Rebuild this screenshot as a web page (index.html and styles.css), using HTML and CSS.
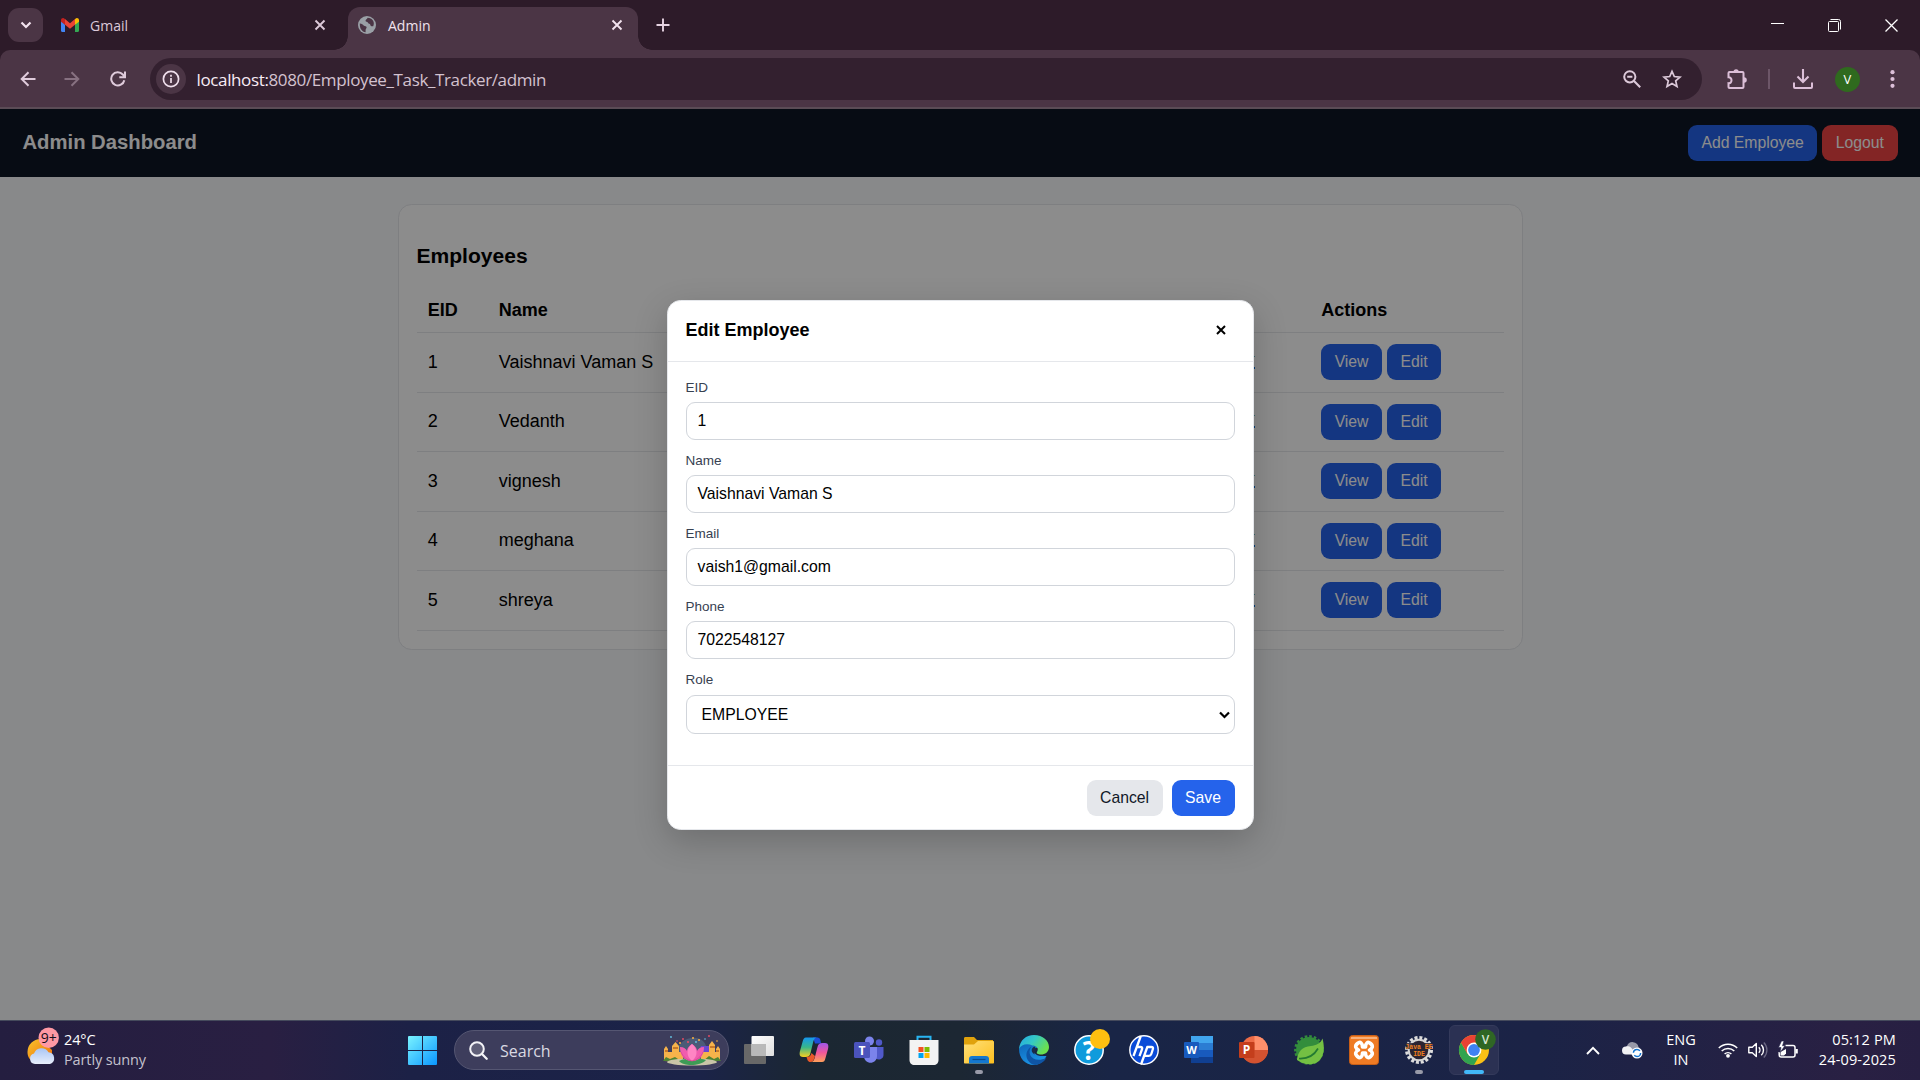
FILE: index.html
```html
<!DOCTYPE html>
<html lang="en">
<head>
<meta charset="utf-8">
<title>Admin</title>
<link rel="stylesheet" href="styles.css">
</head>
<body>
<div class="tabstrip">
  <div class="tab-search"><svg width="12" height="8" viewBox="0 0 12 8"><path d="M1.5 1.5 6 6l4.500-4.500" fill="none" stroke="#f3e3ef" stroke-width="2.200"/></svg></div>
  <div class="tab tab-gmail">
    <svg width="18" height="14" viewBox="0 0 18 14"><path d="M0 2v10.800C0 13.500.5 14 1.200 14H4V6.500z" fill="#4285f4"/><path d="M18 2v10.800c0 .7-.5 1.200-1.200 1.200H14V6.500z" fill="#34a853"/><path d="M14 1.200V6.800l4-3V2.200C18 .2 15.700-.6 14.400.8z" fill="#fbbc04"/><path d="M4 1.200V6.800l-4-3V2.200C0 .2 2.300-.6 3.600.8z" fill="#c5221f"/><path d="M4 1.100 9 5.200l5-4.100v5.700l-5 4-5-4z" fill="#ea4335"/></svg>
    <span class="tab-title">Gmail</span>
    <svg class="tab-close" width="12" height="12" viewBox="0 0 12 12"><path d="M1.500 1.500l9 9M10.500 1.500l-9 9" stroke="#dcc9d9" stroke-width="1.900"/></svg>
  </div>
  <div class="tab tab-active">
    <svg width="18" height="18" viewBox="0 0 18 18"><circle cx="9" cy="9" r="9" fill="#9aa0a6"/><path d="M1.800 7.500c2 .2 3.200 1 4.200 2.300 1 .5 2.300.3 2.600 1.500.2 1.200-1 1.500-1 2.700v2.200C4 15.800 1.600 12.600 1.800 7.500zM9.500 1.800c-.2 1.700-2 1.600-2 3 .2 1.200 1.900.8 2.500 2 .5 1.400 2 .6 2.300 2 .2 1.500 1.500 1.600 2.900 1.400 1.400-2.700.4-5.800-2-7.400-1.200-.7-2.400-1-3.700-1z" fill="#4b3545"/></svg>
    <span class="tab-title">Admin</span>
    <svg class="tab-close" width="12" height="12" viewBox="0 0 12 12"><path d="M1.500 1.500l9 9M10.500 1.500l-9 9" stroke="#f3e3ef" stroke-width="1.900"/></svg>
  </div>
  <svg class="tab-new" width="14" height="14" viewBox="0 0 14 14"><path d="M7 .5v13M.5 7h13" stroke="#e6d3e2" stroke-width="1.900"/></svg>
  <div class="window-controls">
    <svg width="13" height="13" viewBox="0 0 13 13"><path d="M0 4.500h13" stroke="#fff"/></svg>
    <svg width="13" height="13" viewBox="0 0 13 13"><rect x=".5" y="2.500" width="10" height="10" rx="1" fill="none" stroke="#fff"/><path d="M2.500.5h8a2 2 0 0 1 2 2v8" fill="none" stroke="#fff"/></svg>
    <svg width="13" height="13" viewBox="0 0 13 13"><path d="M.5.5l12 12M12.500.5l-12 12" stroke="#fff" stroke-width="1.300"/></svg>
  </div>
</div>

<div class="toolbar">
  <svg class="nav back" width="16" height="16" viewBox="0 0 16 16"><path d="M15.500 8H2M8.500 1.200 1.700 8l6.800 6.800" fill="none" stroke="#dfcbdb" stroke-width="2"/></svg>
  <svg class="nav forward" width="16" height="16" viewBox="0 0 16 16"><path d="M.5 8H14M7.500 1.200 14.300 8l-6.800 6.800" fill="none" stroke="#877181" stroke-width="2"/></svg>
  <svg class="nav reload" width="16" height="16" viewBox="0 0 16 16"><path d="M14.300 9.200A6.600 6.600 0 1 1 12.800 3.500L14.600 5.500M15 .5v5.700H9.300" fill="none" stroke="#dfcbdb" stroke-width="2"/></svg>
  <div class="omnibox">
    <span class="site-info"><svg width="18" height="18" viewBox="0 0 18 18"><circle cx="9" cy="9" r="7.600" fill="none" stroke="#f0dfec" stroke-width="1.700"/><path d="M9 8v5M9 4.800v1.900" stroke="#f0dfec" stroke-width="1.700"/></svg></span>
    <span class="url"><b>localhost:</b>8080/Employee_Task_Tracker/admin</span>
    <svg class="zoom-icon" width="18" height="18" viewBox="0 0 18 18"><circle cx="6.800" cy="6.800" r="5.600" fill="none" stroke="#dcc9d9" stroke-width="2"/><path d="M4.200 6.800h5.200M11 11l6.200 6.200" stroke="#dcc9d9" stroke-width="2.100"/></svg>
    <svg class="star-icon" width="20" height="20" viewBox="0 0 20 20"><path d="M10 2.300l2.300 5.200 5.700.6-4.300 3.800 1.300 5.600-5-3-5 3 1.300-5.600L2 8.100l5.700-.6z" fill="none" stroke="#dcc9d9" stroke-width="1.700"/></svg>
  </div>
  <svg class="ext" width="22" height="22" viewBox="0 0 22 22"><path d="M3.500 4h13a1 1 0 0 1 1 1v14a1 1 0 0 1-1 1h-13a1 1 0 0 1-1-1v-3.800c2 .3 3-1.200 3-2.900S4 9 2.500 9.200V5a1 1 0 0 1 1-1z" fill="none" stroke="#dcbfd8" stroke-width="2"/><path d="M7.500 4a2.600 2.800 0 0 1 5.200 0zM18 9.300a2.800 2.700 0 0 1 0 5.400z" fill="#dcbfd8"/></svg>
  <i class="divider"></i>
  <svg class="download" width="20" height="20" viewBox="0 0 20 20"><path d="M10 0v12.500M4.500 7.500 10 13l5.500-5.500" fill="none" stroke="#dcbfd8" stroke-width="2.100"/><path d="M1 13.500V18a1 1 0 0 0 1 1h16a1 1 0 0 0 1-1v-4.500" fill="none" stroke="#dcbfd8" stroke-width="2"/></svg>
  <span class="avatar">V</span>
  <svg class="menu" width="5" height="18" viewBox="0 0 5 18" fill="#dcbfd8"><circle cx="2.500" cy="2.200" r="2.100"/><circle cx="2.500" cy="9" r="2.100"/><circle cx="2.500" cy="15.800" r="2.100"/></svg>
</div>

<div class="page">
  <header class="app-header">
    <span class="app-title">Admin Dashboard</span>
    <div class="btn-group"><span class="btn">Add Employee</span><span class="btn danger">Logout</span></div>
  </header>
  <main class="card">
    <h3>Employees</h3>
    <div class="row head"><span>EID</span><span>Name</span><span></span><span>Actions</span></div>
    <div class="row"><span>1</span><span>Vaishnavi Vaman S</span><span><i class="link-edge"></i></span><div class="btn-group"><span class="btn">View</span><span class="btn">Edit</span></div></div>
    <div class="row"><span>2</span><span>Vedanth</span><span><i class="link-edge"></i></span><div class="btn-group"><span class="btn">View</span><span class="btn">Edit</span></div></div>
    <div class="row"><span>3</span><span>vignesh</span><span><i class="link-edge"></i></span><div class="btn-group"><span class="btn">View</span><span class="btn">Edit</span></div></div>
    <div class="row"><span>4</span><span>meghana</span><span><i class="link-edge"></i></span><div class="btn-group"><span class="btn">View</span><span class="btn">Edit</span></div></div>
    <div class="row"><span>5</span><span>shreya</span><span><i class="link-edge"></i></span><div class="btn-group"><span class="btn">View</span><span class="btn">Edit</span></div></div>
  </main>
  <div class="overlay">
    <div class="modal">
      <div class="modal-head"><strong>Edit Employee</strong><svg width="10" height="10" viewBox="0 0 10 10"><path d="M1 1l8 8M9 1 1 9" stroke="#000" stroke-width="2"/></svg></div>
      <div class="modal-body">
        <label>EID</label><div class="field">1</div>
        <label>Name</label><div class="field">Vaishnavi Vaman S</div>
        <label>Email</label><div class="field">vaish1@gmail.com</div>
        <label>Phone</label><div class="field">7022548127</div>
        <label>Role</label><div class="field select">EMPLOYEE<svg width="11" height="8" viewBox="0 0 11 8"><path d="M1 1.500 5.500 6 10 1.500" fill="none" stroke="#000" stroke-width="2.200"/></svg></div>
      </div>
      <div class="modal-foot"><span class="btn muted">Cancel</span><span class="btn">Save</span></div>
    </div>
  </div>
</div>

<div class="taskbar">
  <div class="weather">
    <svg width="34" height="40" viewBox="0 0 34 40"><defs><linearGradient id="sun" x1="0" y1="0" x2="1" y2="1"><stop offset="0" stop-color="#f7c52d"/><stop offset="1" stop-color="#ef6c0b"/></linearGradient><linearGradient id="cl" x1="0" y1="0" x2="0" y2="1"><stop offset="0" stop-color="#a9c6f5"/><stop offset="1" stop-color="#e8eefb"/></linearGradient></defs><path d="M25 20v11H8C2 31 .5 26 .5 22A13 13 0 0 1 13.500 9z" fill="url(#sun)"/><path d="M8 34a5.300 5.300 0 0 1-1-10.400 8 8 0 0 1 14.500-1.300A6 6 0 0 1 23 34z" fill="url(#cl)"/><circle cx="21.700" cy="7.700" r="10.200" fill="#ff99a4"/><text x="21.700" y="12.700" text-anchor="middle" class="badge-text">9+</text></svg>
    <div class="weather-text"><span>24°C</span><span class="dim">Partly sunny</span></div>
  </div>
  <svg class="start" width="29" height="29" viewBox="0 0 29 29"><defs><linearGradient id="win" x1="0" y1="0" x2="1" y2="1"><stop offset="0" stop-color="#7af3ff"/><stop offset="1" stop-color="#0a96ff"/></linearGradient></defs><path d="M1 0h13v14H0V1a1 1 0 0 1 1-1zM15 0h13a1 1 0 0 1 1 1v13H15zM0 15h14v14H1a1 1 0 0 1-1-1zM15 15h14v13a1 1 0 0 1-1 1H15z" fill="url(#win)"/></svg>
  <div class="search">
    <svg width="19" height="19" viewBox="0 0 19 19"><circle cx="8" cy="8" r="6.800" fill="#8a8a9c" fill-opacity=".45" stroke="#f3f3f7" stroke-width="2"/><path d="M13 13l4.700 4.700" stroke="#f3f3f7" stroke-width="2.300" stroke-linecap="round"/></svg>
    <span>Search</span>
    <svg width="58" height="32" viewBox="0 0 58 32"><path d="M14 18C14 2 44-4 44 18z" fill="#506580" opacity=".75"/><path d="M38 12h8v8h-10z" fill="#6a48d0"/><g fill="#ef4d64"><circle cx="20" cy="5" r=".9"/><circle cx="46" cy="2" r=".9"/><circle cx="25" cy="8" r="1"/><circle cx="14" cy="7" r=".8"/></g><g fill="#ffb13d"><circle cx="30" cy="4" r="1"/><circle cx="36" cy="6" r="1"/><circle cx="17" cy="9" r="1"/><circle cx="54" cy="7" r=".8"/></g><g fill="#65c7e8"><circle cx="8" cy="3" r=".9"/><circle cx="33" cy="8" r=".9"/><circle cx="42" cy="5" r=".8"/></g><path d="M1 27V15l2-3 2 3v3h4v-6l3.500-4 3.500 4v6h4v10zM57 27V15l-2-3-2 3v3h-1v-7l-3-4-3 4v7h-8v9z" fill="#f6b34b"/><path d="M2 16h3v2H2zm8-3h5v2h-5zm37-1h5v2h-5zm6 4h3v2h-3z" fill="#c7792a"/><path d="M0 27l3-4 4 2 5-2 6 4zm58 0l-3-4-4 2-5-3-6 5z" fill="#4f8433"/><ellipse cx="29" cy="28" rx="25" ry="3.500" fill="#c9c5a8"/><path d="M16 27c6-3 20-3 27-1-5 6-22 7-27 1z" fill="#3e9b56"/><path d="M29 27c-9 0-12-7-12-14 4 0 6 2 7 4 0-3 2-5 5-7 3 2 5 4 5 7 1-2 3-4 7-4 0 7-3 14-12 14z" fill="#f05cae"/><path d="M29 10c-6 5-6 12 0 17 6-5 6-12 0-17z" fill="#ff85c4"/><path d="M18 18c2 5 6 8 11 9 5-1 9-4 11-9" fill="none" stroke="#d63f8e" stroke-width=".7"/></svg>
  </div>
  <div class="apps">
    <div class="app"><svg width="30" height="30" viewBox="0 0 30 30"><defs><linearGradient id="tvw" x1="0" y1="0" x2="1" y2="1"><stop offset="0" stop-color="#fff"/><stop offset="1" stop-color="#dedede"/></linearGradient></defs><rect x="0" y="9" width="22" height="20" rx="1" fill="#686868"/><rect x="7.500" y="1" width="22.500" height="20" rx="1" fill="url(#tvw)"/><path d="M7.500 9H22v12H7.500z" fill="#b9b9b9"/></svg></div>
    <div class="app"><svg width="30" height="30" viewBox="0 0 30 30"><defs><linearGradient id="cpA" x1="0" y1="0" x2="0" y2="1"><stop offset="0" stop-color="#1597f0"/><stop offset=".5" stop-color="#38b78a"/><stop offset="1" stop-color="#f7cf20"/></linearGradient><linearGradient id="cpB" x1="0" y1="0" x2="0" y2="1"><stop offset="0" stop-color="#a057ec"/><stop offset=".5" stop-color="#f0569b"/><stop offset="1" stop-color="#ffa05a"/></linearGradient></defs><path d="M14 2.500h4c3 0 3.500 2 4 6h-6z" fill="#1d4fd7"/><path d="M7 2.500h11c-2.500 0-3.500 3-4.200 6L11.500 18c-.8 3-2 4-5 4H4c-3.500 0-3.800-3-3-6L3.500 7C4.300 4 5 2.500 7 2.500z" fill="url(#cpA)"/><path d="M23 27H12c2.500 0 3.500-3 4.200-6l2.300-9c.8-3 2-4 5-4H26c3.500 0 3.800 3 3 6l-2.500 9c-.8 3-1.500 4-3.500 4z" fill="url(#cpB)"/><path d="M7.500 22c3 0 4-1 5-4l3.500 3c-1 4-2 6-4.500 6-3 0-3-2.500-4-5z" fill="#e9582a"/></svg></div>
    <div class="app"><svg width="30" height="30" viewBox="0 0 30 30"><circle cx="25" cy="7.500" r="3.200" fill="#5059c9"/><path d="M20 12h9.500v8c0 5-7 6-9.500 2z" fill="#5059c9"/><circle cx="15.500" cy="6" r="4.500" fill="#7b83eb"/><path d="M10 12h13v9c0 9-13 9-13 0z" fill="#7b83eb"/><rect x="0" y="7" width="16" height="16" rx="1.500" fill="#4b53bc"/><text x="8" y="19.500" text-anchor="middle" class="glyph g12">T</text></svg></div>
    <div class="app"><svg width="30" height="30" viewBox="0 0 30 30"><path d="M8.500 7V1.800h13V7" fill="none" stroke="#28b5f2" stroke-width="2"/><path d="M.5 5h29v20c0 3-2 5-5 5h-19c-3 0-5-2-5-5z" fill="#f3f3f3"/><path d="M9.500 12h5v5h-5z" fill="#f25022"/><path d="M15.500 12h5v5h-5z" fill="#7fba00"/><path d="M9.500 18h5v5h-5z" fill="#00a4ef"/><path d="M15.500 18h5v5h-5z" fill="#ffb900"/></svg></div>
    <div class="app"><svg width="30" height="30" viewBox="0 0 30 30"><defs><linearGradient id="fo" x1="0" y1="0" x2="1" y2="1"><stop offset="0" stop-color="#ffe07a"/><stop offset="1" stop-color="#fdbf1e"/></linearGradient></defs><path d="M0 3.500C0 2.500.6 2 1.500 2H10l3 3h16v6H0z" fill="#e0a20c"/><path d="M0 9.500h10L14 6h15c.6 0 1 .4 1 1v20.500c0 .6-.4 1-1 1H1c-.6 0-1-.4-1-1z" fill="url(#fo)"/><path d="M5 28.500V24c0-2 1-3 3-3h14c2 0 3 1 3 3v4.500z" fill="#1478cf"/><path d="M8.500 24.500h13" stroke="#0a4c8e" stroke-width="1.200"/></svg><i class="running"></i></div>
    <div class="app"><svg width="30" height="30" viewBox="0 0 30 30"><defs><linearGradient id="ed1" x1="0" y1="0" x2="1" y2=".5"><stop offset="0" stop-color="#22a8e8"/><stop offset=".5" stop-color="#35c8c4"/><stop offset="1" stop-color="#6be04e"/></linearGradient><linearGradient id="ed2" x1="0" y1="0" x2=".5" y2="1"><stop offset="0" stop-color="#0d62b5"/><stop offset="1" stop-color="#1c95e6"/></linearGradient></defs><path d="M0 14C2 6 10 5 16 9l4 4c-6-2-8 6 1 8h6.500c-3 5.500-7 9-12.500 9C6 30 0 23 0 14z" fill="url(#ed2)"/><path d="M0 14C1 5 7 0 15 0c9 0 15 6 15 12 0 5-4 7.500-8 7.500-3 0-5-1-4-2.500 2.500-4-1-6.500-4.500-6.500C8 8 2 9.500 0 14z" fill="url(#ed1)"/><path d="M12.500 11.500c-5.500 7 1 17.500 15 11.500-3 4.500-7 6.500-11 7-9-1-13-13-4-18.500z" fill="#0f55a5"/><path d="M15.500 11.500c-4 1.500-3.500 6.500.5 8-1-1-.5-1.500 0-2 1-1.500 1-5-.5-6z" fill="#1b2a48"/></svg></div>
    <div class="app"><svg class="tall" width="40" height="40" viewBox="0 0 40 40"><circle cx="20" cy="20" r="14.200" fill="#0f9bdc" stroke="#fff" stroke-width="1.500"/><text x="20" y="29.500" text-anchor="middle" class="glyph help">?</text><circle cx="31" cy="9" r="10" fill="#ffbf10"/></svg></div>
    <div class="app"><svg width="30" height="30" viewBox="0 0 30 30"><circle cx="15" cy="15" r="14.200" fill="#0a4bd8" stroke="#fff" stroke-width="1.400"/><path d="M11.800 1 4.500 21M7.800 12h3.700c1.500 0 2 .8 1.600 2l-2.600 7.200M18.500 11.500 12 29.500M17.800 12h4.500c1.500 0 2 .8 1.600 2l-1.600 5c-.4 1.200-1 1.800-2.500 1.800h-4.500" fill="none" stroke="#fff" stroke-width="2.300"/></svg></div>
    <div class="app"><svg width="30" height="30" viewBox="0 0 30 30"><path d="M7 1h22v7H7z" fill="#41a5ee"/><path d="M7 8h22v7H7z" fill="#2b7cd3"/><path d="M7 15h22v7H7z" fill="#185abd"/><path d="M7 22h22v6H7z" fill="#103f91"/><rect x="0" y="7" width="15" height="16" rx="1" fill="#185abd"/><text x="7.500" y="19.200" text-anchor="middle" class="glyph g11">W</text></svg></div>
    <div class="app"><svg width="30" height="30" viewBox="0 0 30 30"><circle cx="15.500" cy="14.500" r="13.500" fill="#ed6c47"/><path d="M15.500 1A13.500 13.500 0 0 1 29 15H15.500z" fill="#ff8f6b"/><path d="M2 15h27a13.500 13.500 0 0 1-27 0z" fill="#d35230"/><rect x="0" y="7" width="15.500" height="16" rx="1" fill="#c43e1c"/><text x="7.500" y="19.200" text-anchor="middle" class="glyph g12">P</text></svg></div>
    <div class="app"><svg width="30" height="30" viewBox="0 0 30 30"><circle cx="15" cy="15" r="13" fill="#338d3c"/><circle cx="15" cy="15" r="13.700" fill="none" stroke="#338d3c" stroke-width="2.400" stroke-dasharray="2.600 2"/><path d="M28.500 3.500C31 13 30 21 25 26 19 31 10 30 3 25 4 16 8 12 17 11c5-.6 9-2 11.500-7.500z" fill="#74c043"/><path d="M5 23.500c9 .5 15-3 19-10" fill="none" stroke="#237a32" stroke-width="1.700"/></svg></div>
    <div class="app"><svg width="30" height="30" viewBox="0 0 30 30"><rect x=".5" y=".5" width="29" height="29" rx="3" fill="#ef7b24" stroke="#c95f17"/><path d="M2 2h26v2H2z" fill="#f7b07a"/><path d="M8.500 8.500c3-2.500 5 0 5 3.500h3c0-3.500 2-6 5-3.500s2 5-1 6.500c3 1.500 4 4 1 6.500s-5 0-5-3.500h-3c0 3.500-2 6-5 3.500s-2-5 1-6.500c-3-1.500-4-4-1-6.500z" fill="none" stroke="#fff" stroke-width="3.600" stroke-linejoin="round"/></svg></div>
    <div class="app"><svg class="tall" width="40" height="40" viewBox="0 0 40 40"><circle cx="20" cy="20" r="12.400" fill="none" stroke="#ddd" stroke-width="3.200" stroke-dasharray="3 1.870"/><circle cx="20" cy="20" r="10.300" fill="#2a2433" stroke="#d6d6d6" stroke-width="2"/><path d="M7 13h26v6H7zM14 20h12v6H14z" fill="#2a2433" opacity=".85"/><text x="20" y="18.500" text-anchor="middle" class="java">Java EE</text><text x="20" y="25.500" text-anchor="middle" class="java">IDE</text></svg><i class="running"></i></div>
    <div class="app current"><svg class="tall" width="40" height="40" viewBox="0 0 40 40"><circle cx="20" cy="20" r="15" fill="#fbc116"/><path d="M20 20 7 12.500A15 15 0 0 1 33 12.500H20z" fill="#e94235"/><path d="M7 12.500A15 15 0 0 0 20 35l6.500-11.200L20 20l-6.500 3.700z" fill="#31a450"/><path d="M7 12.500 13.500 23.800 20 20V12.500z" fill="#e94235"/><circle cx="20" cy="20" r="7.400" fill="#fff"/><circle cx="20" cy="20" r="5.900" fill="#3f82f3"/><circle cx="31.500" cy="9.500" r="10.300" fill="#2f6624"/><text x="31.500" y="13.800" text-anchor="middle" class="glyph g12 pale">V</text></svg><i class="running active"></i></div>
  </div>
  <div class="tray">
    <svg class="chev" width="14" height="9" viewBox="0 0 14 9"><path d="M1 8l6-6.200L13 8" fill="none" stroke="#fff" stroke-width="1.900"/></svg>
    <svg class="cloud" width="22" height="20" viewBox="0 0 22 20"><path d="M5 14a4.500 4.500 0 0 1 0-8 6 6 0 0 1 11.500 1c2 1 2 7 0 7z" fill="#9899a8"/><path d="M4 14.500a4 4 0 0 1 0-8c3-1 5 0 7 3.500v4.500z" fill="#f2f2f5"/><circle cx="15" cy="13" r="5.500" fill="#fff"/><circle cx="15" cy="13" r="3.600" fill="none" stroke="#1273cf" stroke-width="1.500" stroke-dasharray="8.500 2.800"/></svg>
    <div class="lang"><span>ENG</span><span>IN</span></div>
    <svg class="wifi" width="20" height="16" viewBox="0 0 20 16"><path d="M.8 6a13 13 0 0 1 18.400 0M3.700 9a9 9 0 0 1 12.600 0M6.600 12a5 5 0 0 1 6.800 0" fill="none" stroke="#fff" stroke-width="1.500"/><circle cx="10" cy="13.800" r="1.900" fill="#fff"/></svg>
    <svg class="vol" width="20" height="16" viewBox="0 0 20 16"><path d="M.8 5.200h3.500L8.300 1.500v13L4.300 10.800H.8z" fill="none" stroke="#fff" stroke-width="1.400" stroke-linejoin="round"/><path d="M10.800 5.200a4 4 0 0 1 0 5.600M13.300 2.700a7.500 7.500 0 0 1 0 10.600" fill="none" stroke="#fff" stroke-width="1.400"/><path d="M15.800.5a10.600 10.600 0 0 1 0 15" fill="none" stroke="#6c6984" stroke-width="1.300"/></svg>
    <svg class="bat" width="20" height="18" viewBox="0 0 20 18"><path d="M7.500 4.500H15a2 2 0 0 1 2 2V14a2 2 0 0 1-2 2H3.200a2 2 0 0 1-2-2V11" fill="none" stroke="#fff" stroke-width="1.500"/><path d="M17.500 8h2.300v4.500h-2.300z" fill="#fff"/><path d="M2.500 14.500V11L8 8v4.500l-2 2z" fill="#fff"/><path d="M3.500 0 .5 6.500h2.500L2 11.500 7 4.800H4.500L6 0z" fill="#fff" stroke="#21234a" stroke-width=".6"/></svg>
    <div class="clock"><span>05:12 PM</span><span>24-09-2025</span></div>
  </div>
</div>
</body>
</html>
```
FILE: styles.css
```css
* { box-sizing: border-box; }
body {
  margin: 0; width: 1920px; height: 1080px; overflow: hidden;
  display: flex; flex-direction: column;
  background: #2d1b29; font-family: "Liberation Sans", Arial, sans-serif;
}
svg { display: block; flex: none; }

.tabstrip { height: 50px; display: flex; align-items: center; padding-left: 8px; font: 14px "Open Sans", sans-serif; color: #f0e2ed; }
.tab-search { width: 35px; height: 34px; border-radius: 11px; background: #4b3545; display: flex; align-items: center; justify-content: center; }
.tab { display: flex; align-items: center; }
.tab-gmail { width: 287px; margin-left: 18px; color: #dcc9d9; }
.tab-title { margin-left: 11px; }
.tab-close { margin-left: auto; }
.tab-active { position: relative; width: 290px; height: 43px; align-self: flex-end; padding: 0 15px 7px 10px; background: #4b3545; border-radius: 12px 12px 0 0; }
.tab-active .tab-title { margin-left: 12px; }
.tab-gmail .tab-close { margin-right: 22px; }
.tab-active::before, .tab-active::after { content: ""; position: absolute; bottom: 0; width: 14px; height: 14px; }
.tab-active::before { left: -14px; background: radial-gradient(circle at 0 0, transparent 13.500px, #4b3545 14px); }
.tab-active::after { right: -14px; background: radial-gradient(circle at 100% 0, transparent 13.500px, #4b3545 14px); }
.tab-new { margin-left: 18px; }
.window-controls { margin-left: auto; display: flex; gap: 44px; padding-right: 22.500px; }

.toolbar { height: 59px; background: #4b3545; border-bottom: 2px solid #5b4c56; border-radius: 10px 10px 0 0; display: flex; align-items: center; padding: 1px 0 0 20px; }
.forward { margin-left: 28px; }
.reload { margin-left: 30px; }
.omnibox { width: 1552px; height: 42px; margin-left: 24px; border-radius: 21px; background: #33202f; display: flex; align-items: center; padding: 0 20px 0 6px; }
.site-info { width: 30px; height: 30px; border-radius: 50%; background: #4b3545; display: flex; align-items: center; justify-content: center; }
.url { margin-left: 10.500px; font: 17px "Open Sans", sans-serif; color: #d3c2cf; letter-spacing: -.370px; }
.url b { font-weight: 400; color: #f8ecf5; }
.zoom-icon { margin-left: auto; }
.star-icon { margin-left: 21px; }
.ext { margin-left: 24px; }
.divider { width: 2px; height: 20px; margin-left: 20px; background: #6d5668; }
.download { margin-left: 23px; }
.avatar { width: 25px; height: 25px; margin-left: 22px; border-radius: 50%; background: #2f6a1e; color: #fff; font: 13px/25px "Open Sans", sans-serif; text-align: center; }
.menu { margin-left: 30px; }

.page { position: relative; height: 911px; background: #f8fafc; overflow: hidden; }
.app-header { height: 68px; padding: 0 22.500px; background: #0e1625; display: flex; align-items: center; justify-content: space-between; }
.app-title { color: #fff; font-size: 20.250px; font-weight: 700; margin-top: -2px; }
.btn-group { display: flex; gap: 5px; }
.btn { height: 36px; padding: 0 13.500px; border-radius: 9px; background: #2563eb; color: #fff; font-size: 15.750px; line-height: 35px; white-space: nowrap; }
.danger { background: #ef4444; }
.muted { background: #e5e7eb; color: #111827; }
.card { width: 1125px; height: 446px; margin: 27px auto 0; padding: 36.800px 18px 0; border: 1px solid #e5e7eb; border-radius: 13.500px; background: #fff; color: #000; }
h3 { margin: 0; height: 47px; font-size: 21.060px; line-height: 27px; }
.row { height: 59.500px; display: grid; grid-template-columns: 71px 620px 202.400px 1fr; align-items: center; padding-left: 11.250px; border-bottom: 1px solid #e5e7eb; font-size: 18px; }
.head { height: 44.300px; font-weight: 700; }
.row > span { white-space: nowrap; }
.link-edge { display: block; width: 1px; height: 13px; margin: 0 0 0 135px; background: linear-gradient(#68b9bf 0 1px, transparent 1px 11px, #0a70d8 11px); }

.overlay { position: absolute; inset: 0; background: rgba(0, 0, 0, .45); display: flex; justify-content: center; align-items: flex-start; padding-top: 191px; }
.modal { width: 587px; height: 530px; border: 1px solid #e5e7eb; border-radius: 13.500px; background: #fff; box-shadow: 0 11px 34px rgba(0, 0, 0, .2); display: flex; flex-direction: column; }
.modal-head { height: 61px; padding: 0 27px 2px 18px; border-bottom: 1px solid #e5e7eb; display: flex; align-items: center; justify-content: space-between; font-size: 18px; }
.modal-body { flex: 1; padding: 18px 18px 0; display: flex; flex-direction: column; }
label { height: 22px; line-height: 15px; font-size: 13.500px; color: #374151; }
.field { height: 38px; margin-bottom: 13px; padding: 0 11px; border: 1px solid #d1d5db; border-radius: 9px; line-height: 35px; font-size: 15.750px; color: #000; }
.select { height: 39px; margin-top: 1px; padding: 0 4px 0 15px; line-height: 37px; display: flex; align-items: center; justify-content: space-between; }
.modal-foot { height: 64px; padding: 14px 18px 0; border-top: 1px solid #e5e7eb; display: flex; justify-content: flex-end; gap: 9px; }

.taskbar { height: 60px; padding-bottom: 1px; border-top: 1px solid #454a5c; display: flex; align-items: center; color: #fff; font: 14.500px/20px "Open Sans", sans-serif; background: linear-gradient(90deg, #241e40 0, #291f42 270px, #1c2146 410px, #1b2348 700px, #1b2732 810px, #1c2733 960px, #192546 1110px, #1b2346 1540px, #292043 1850px, #271f42 100%); }
.weather { width: 381px; display: flex; align-items: center; padding-left: 27px; }
.weather svg { overflow: visible; }
.weather-text { display: flex; flex-direction: column; margin: -1px 0 0 3px; letter-spacing: -.120px; }
.dim { color: #c4c2ce; }
.badge-text { font: 14px "Open Sans", sans-serif; letter-spacing: 0; fill: #15101c; }
.start { margin: 1px 0 0 27px; }
.search { width: 275px; height: 40px; margin-left: 17px; padding: 0 7px 0 14px; border: 1px solid #555672; border-radius: 20px; background: #3d3d5c; display: flex; align-items: center; font-size: 16px; color: #d9d9e2; }
.search span { margin: 1px auto 0 12px; }
.apps { display: flex; margin-left: 2px; }
.app { position: relative; width: 55px; height: 50px; display: flex; align-items: center; justify-content: center; }
.tall { overflow: visible; }
.current { width: 50px; margin-left: 3px; border-radius: 6px; background: #2b3153; border: 1px solid #343a5b; }
.running { position: absolute; left: 50%; bottom: 1px; width: 8px; height: 4px; margin-left: -4px; border-radius: 2px; background: #989aa8; }
.running.active { width: 20px; margin-left: -10px; bottom: 0; background: #42b8f8; }
.glyph { font-family: "Open Sans", sans-serif; font-weight: 700; fill: #fff; }
.g11 { font-size: 11px; }
.g12 { font-size: 12px; }
.help { font-size: 26px; }
.pale { fill: #d8e6d5; font-weight: 600; }
.java { font: 700 6.500px "Liberation Mono", monospace; fill: #f08020; }
.tray { flex: 1; display: flex; align-items: center; padding-right: 24px; }
.chev { margin-left: 87px; }
.cloud { margin-left: 22px; }
.lang { width: 34px; margin-left: 20px; display: flex; flex-direction: column; align-items: center; }
.wifi { margin-left: 20px; }
.vol, .bat { margin-left: 10px; }
.clock { margin: -1px 0 0 auto; display: flex; flex-direction: column; align-items: flex-end; letter-spacing: .160px; }
```
